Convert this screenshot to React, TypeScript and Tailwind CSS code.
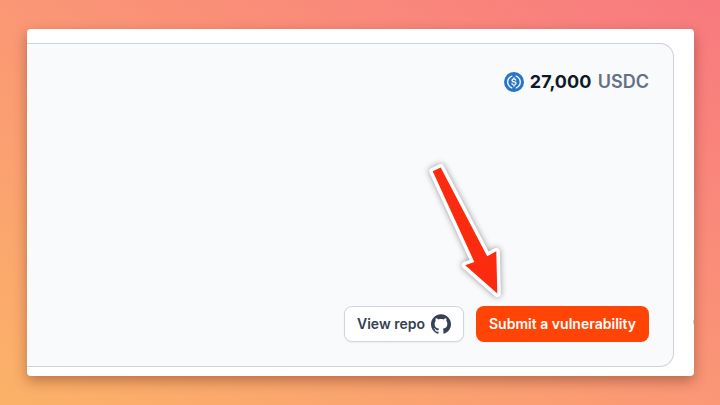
import React from 'react';
import { SiGithub } from 'react-icons/si';

function UsdcIcon() {
  return (
    <svg viewBox="0 0 32 32" className="size-5 shrink-0">
      <circle cx="16" cy="16" r="16" fill="#2775ca" />
      <g fill="#fff" stroke="#fff" strokeWidth="0.3">
        <path d="M20.022 18.124c0-2.124-1.28-2.852-3.84-3.156-1.828-.243-2.193-.728-2.193-1.578 0-.85.61-1.396 1.828-1.396 1.097 0 1.707.364 2.011 1.275a.458.458 0 00.427.303h.975a.416.416 0 00.427-.425v-.06a3.04 3.04 0 00-2.743-2.489V9.142c0-.243-.183-.425-.487-.486h-.915c-.243 0-.426.182-.487.486v1.396c-1.829.242-2.986 1.456-2.986 2.974 0 2.002 1.218 2.791 3.778 3.095 1.707.303 2.255.668 2.255 1.639 0 .97-.853 1.638-2.011 1.638-1.585 0-2.133-.667-2.316-1.578-.06-.242-.244-.364-.427-.364h-1.036a.416.416 0 00-.426.425v.06c.243 1.518 1.219 2.61 3.23 2.914v1.457c0 .242.183.425.487.485h.915c.243 0 .426-.182.487-.485V21.34c1.829-.303 3.047-1.578 3.047-3.217z" />
        <path d="M12.892 24.497c-4.754-1.7-7.192-6.98-5.424-11.653.914-2.55 2.925-4.491 5.424-5.402.244-.121.365-.303.365-.607v-.85c0-.242-.121-.424-.365-.485-.061 0-.183 0-.244.06a10.895 10.895 0 00-7.13 13.717c1.096 3.4 3.717 6.01 7.13 7.102.244.121.488 0 .548-.243.061-.06.061-.122.061-.243v-.85c0-.182-.182-.424-.365-.546zm6.46-18.936c-.244-.122-.488 0-.548.242-.061.061-.061.122-.061.243v.85c0 .243.182.485.365.607 4.754 1.7 7.192 6.98 5.424 11.653-.914 2.55-2.925 4.491-5.424 5.402-.244.121-.365.303-.365.607v.85c0 .242.121.424.365.485.061 0 .183 0 .244-.06a10.895 10.895 0 007.13-13.717c-1.096-3.46-3.778-6.07-7.13-7.162z" />
      </g>
    </svg>
  );
}

function PointerArrow() {
  return (
    <svg
      viewBox="0 0 100 155"
      className="pointer-events-none absolute left-[415px] top-[150px] h-[155px] w-[100px] drop-shadow-[0_0_3px_rgba(0,0,0,0.4)]"
    >
      <path
        d="M17.7 21.3 25.7 17.5 72.2 106.3 81.3 101.3 82.3 143.5 50.2 115.3 59.3 111.9Z"
        fill="#fff"
        stroke="#fff"
        strokeWidth="7"
        strokeLinejoin="round"
      />
      <path d="M17.7 21.3 25.7 17.5 72.2 106.3 81.3 101.3 82.3 143.5 50.2 115.3 59.3 111.9Z" fill="#fa2b0e" />
    </svg>
  );
}

export default function App() {
  return (
    <div className="relative h-[405px] w-[720px] overflow-hidden bg-linear-to-tr from-[#fbb267] to-[#f8797f] pl-[27px] pt-[29px] font-['Inter',sans-serif]">
      <main className="relative h-[347px] w-[667px] overflow-hidden rounded bg-white pt-3.5 shadow-[0_5px_13px_rgba(80,30,10,0.38)]">
        <section className="flex h-[324px] w-[647px] flex-col items-end justify-between rounded-r-[14px] border border-l-0 border-[#cdd2dc] bg-[#f9fafc] pb-6 pr-6 pt-6">
          <div className="flex h-7 items-center text-lg">
            <UsdcIcon />
            <span className="ml-1.5 font-bold text-[#101828]">27,000</span>
            <span className="ml-[6.5px] font-semibold text-[#667085]">USDC</span>
          </div>
          <div className="flex gap-3 text-sm font-semibold">
            <button className="flex h-9 w-[120px] items-center justify-center gap-1.5 rounded-lg border border-[#d0d5dd] bg-white text-[#344054] shadow-xs">
              View repo
              <SiGithub className="size-5" />
            </button>
            <button className="h-9 w-[173px] rounded-lg bg-[#ff4405] text-white">
              <span className="tracking-[0.02px]">Submit a vulnerability</span>
            </button>
          </div>
        </section>
        <span className="absolute right-[-9px] top-[288px] size-2.5 rounded-full bg-[#a9d8b4]" />
      </main>
      <PointerArrow />
    </div>
  );
}
